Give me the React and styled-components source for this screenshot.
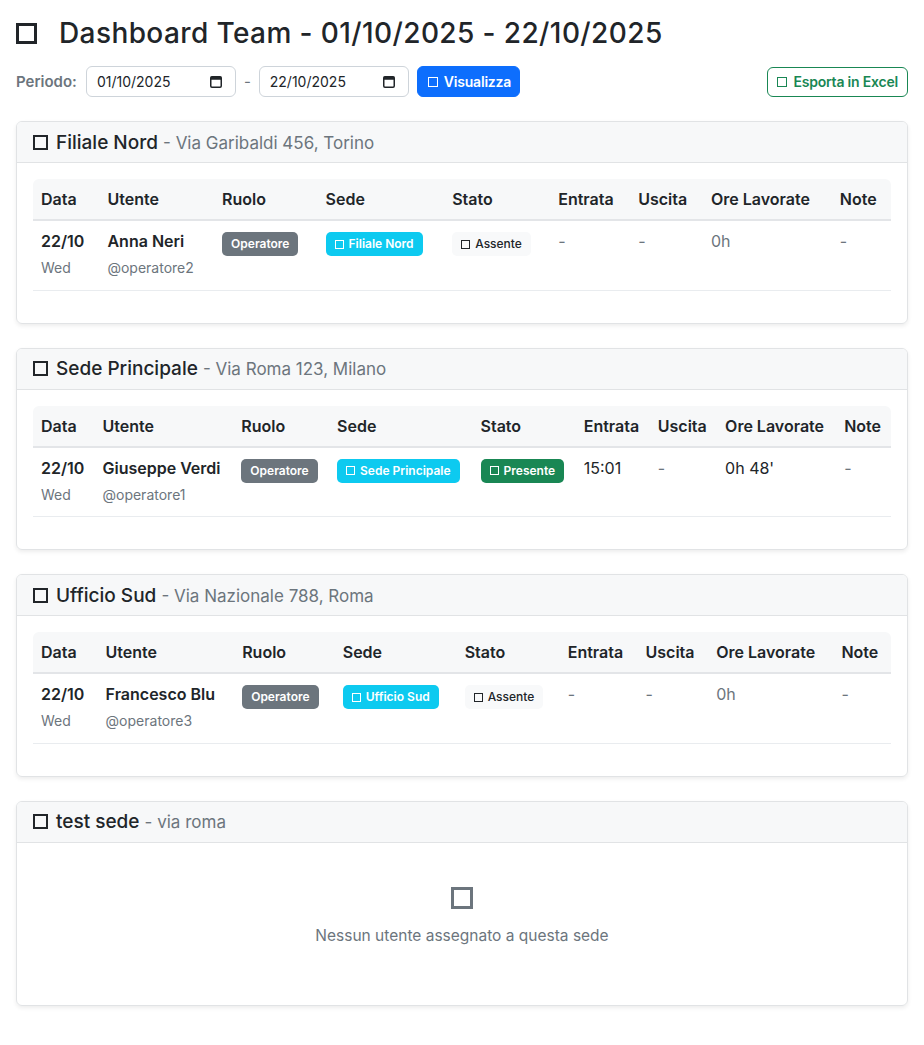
import React from 'react'
import styled, { createGlobalStyle } from 'styled-components'

const GlobalStyle = createGlobalStyle`
  * { box-sizing: border-box; }
  body {
    margin: 0;
    background: #fff;
    color: #212529;
    font-family: Inter, "Noto Sans", sans-serif;
  }
`

const sedi = [
  {
    name: 'Filiale Nord',
    address: 'Via Garibaldi 456, Torino',
    rows: [
      { date: '22/10', day: 'Wed', name: 'Anna Neri', user: '@operatore2', sede: 'Filiale Nord', present: false, entrata: '-', uscita: '-', ore: '0h', note: '-' },
    ],
  },
  {
    name: 'Sede Principale',
    address: 'Via Roma 123, Milano',
    rows: [
      { date: '22/10', day: 'Wed', name: 'Giuseppe Verdi', user: '@operatore1', sede: 'Sede Principale', present: true, entrata: '15:01', uscita: '-', ore: "0h 48'", note: '-' },
    ],
  },
  {
    name: 'Ufficio Sud',
    address: 'Via Nazionale 788, Roma',
    rows: [
      { date: '22/10', day: 'Wed', name: 'Francesco Blu', user: '@operatore3', sede: 'Ufficio Sud', present: false, entrata: '-', uscita: '-', ore: '0h', note: '-' },
    ],
  },
  { name: 'test sede', address: 'via roma', rows: [] },
]

const columns = ['Data', 'Utente', 'Ruolo', 'Sede', 'Stato', 'Entrata', 'Uscita', 'Ore Lavorate', 'Note']

function CalendarIcon() {
  return (
    <svg width="12" height="13" viewBox="0 0 12 13">
      <rect x="0.75" y="1.75" width="10.5" height="10.5" rx="1.2" fill="none" stroke="#212529" strokeWidth="1.5" />
      <rect x="0.75" y="1.75" width="10.5" height="3" fill="#212529" />
    </svg>
  )
}

function DateField({ value }) {
  return (
    <DateBox>
      <span>{value}</span>
      <CalendarIcon />
    </DateBox>
  )
}

function SedeCard({ sede }) {
  return (
    <Card>
      <CardHeader>
        <Glyph $size={15} $stroke={2} />
        <HeaderTitle>
          {sede.name} <Address>- {sede.address}</Address>
        </HeaderTitle>
      </CardHeader>
      <CardBody>
        {sede.rows.length === 0 ? (
          <Empty>
            <Glyph $size={22} $stroke={3} />
            <EmptyText>Nessun utente assegnato a questa sede</EmptyText>
          </Empty>
        ) : (
          <Table>
            <thead>
              <tr>
                {columns.map(c => <Th key={c}>{c}</Th>)}
              </tr>
            </thead>
            <tbody>
              {sede.rows.map(r => (
                <tr key={r.user}>
                  <Td>
                    <Strong>{r.date}</Strong>
                    <Sub>{r.day}</Sub>
                  </Td>
                  <Td>
                    <Strong>{r.name}</Strong>
                    <Sub>{r.user}</Sub>
                  </Td>
                  <Td><Badge $bg="#6c757d">Operatore</Badge></Td>
                  <Td>
                    <Badge $bg="#0dcaf0"><Glyph $size={9} $stroke={1.5} />{r.sede}</Badge>
                  </Td>
                  <Td>
                    {r.present
                      ? <Badge $bg="#198754"><Glyph $size={9} $stroke={1.5} />Presente</Badge>
                      : <Badge $bg="#f8f9fa" $color="#212529" $weight={500}><Glyph $size={9} $stroke={1.5} />Assente</Badge>}
                  </Td>
                  <Td $muted={r.entrata === '-'}>{r.entrata}</Td>
                  <Td $muted>{r.uscita}</Td>
                  <Td $muted={!r.present}>{r.ore}</Td>
                  <Td $muted>{r.note}</Td>
                </tr>
              ))}
            </tbody>
          </Table>
        )}
      </CardBody>
    </Card>
  )
}

export default function App() {
  return (
    <Page>
      <GlobalStyle />
      <Title>
        <Glyph $size={21} $stroke={3} />
        <span>Dashboard Team - 01/10/2025 - 22/10/2025</span>
      </Title>
      <Toolbar>
        <Filters>
          <Label>Periodo:</Label>
          <DateField value="01/10/2025" />
          <Dash>-</Dash>
          <DateField value="22/10/2025" />
          <PrimaryButton><Glyph $size={10} $stroke={1.5} />Visualizza</PrimaryButton>
        </Filters>
        <ExportButton><Glyph $size={10} $stroke={1.5} />Esporta in Excel</ExportButton>
      </Toolbar>
      {sedi.map(s => <SedeCard key={s.name} sede={s} />)}
    </Page>
  )
}

const Page = styled.div`
  padding: 16px 16px 40px;
`

const Glyph = styled.span`
  display: inline-block;
  flex-shrink: 0;
  width: ${p => p.$size}px;
  height: ${p => p.$size}px;
  border: ${p => p.$stroke}px solid currentColor;
`

const Title = styled.h1`
  display: flex;
  align-items: center;
  gap: 22px;
  margin: 0 0 16px;
  padding-top: 1px;
  height: 34px;
  font-size: 28px;
  font-weight: 500;
  line-height: 1.2;
  letter-spacing: 0.4px;
  color: #212529;
`

const Toolbar = styled.div`
  display: flex;
  justify-content: space-between;
  align-items: center;
  margin-bottom: 24px;
`

const Filters = styled.div`
  display: flex;
  align-items: center;
  gap: 8px;
`

const Label = styled.span`
  font-size: 15px;
  font-weight: 600;
  color: #6c757d;
  margin-right: 1px;
`

const Dash = styled.span`
  color: #6c757d;
  font-size: 15px;
`

const DateBox = styled.div`
  display: flex;
  align-items: center;
  justify-content: space-between;
  width: 150px;
  height: 31px;
  padding: 0 13px 0 10px;
  border: 1px solid #ced4da;
  border-radius: 6px;
  font-size: 14px;
  color: #212529;
`

const PrimaryButton = styled.button`
  display: inline-flex;
  align-items: center;
  gap: 6px;
  height: 31px;
  padding: 0 8px 0 10px;
  border: 1px solid #0d6efd;
  border-radius: 6px;
  background: #0d6efd;
  color: #fff;
  font-family: inherit;
  font-size: 14px;
  font-weight: 600;
  letter-spacing: -0.2px;
`

const ExportButton = styled(PrimaryButton)`
  height: 30px;
  padding: 0 9px;
  background: #fff;
  border-color: #198754;
  color: #198754;
`

const Card = styled.div`
  border: 1px solid #e1e3e5;
  border-radius: 6px;
  box-shadow: 0 2px 4px rgba(0, 0, 0, 0.075);
  margin-bottom: 24px;
  overflow: hidden;
`

const CardHeader = styled.div`
  display: flex;
  align-items: center;
  gap: 8px;
  height: 41px;
  padding: 0 16px;
  background: #f7f8f9;
  border-bottom: 1px solid #e1e3e5;
  color: #212529;
`

const HeaderTitle = styled.span`
  font-size: 19px;
  font-weight: 500;
  white-space: pre;
`

const Address = styled.span`
  font-size: 17px;
  font-weight: 400;
  color: #6c757d;
`

const CardBody = styled.div`
  padding: 16px;
`

const Table = styled.table`
  width: 100%;
  border-collapse: separate;
  border-spacing: 0;
  margin-bottom: 16px;
  font-size: 16px;
`

const Th = styled.th`
  text-align: left;
  padding: 8px;
  height: 42px;
  background: #f7f8f9;
  border-bottom: 2px solid #e3e5e8;
  font-weight: 600;
  white-space: nowrap;
  &:first-child { border-top-left-radius: 6px; }
  &:last-child { border-top-right-radius: 6px; }
`

const Td = styled.td`
  vertical-align: top;
  padding: 8px 8px 9.5px;
  line-height: 24px;
  border-bottom: 1px solid #e9ecef;
  white-space: nowrap;
  color: ${p => (p.$muted ? '#6c757d' : '#212529')};
`

const Strong = styled.div`
  font-weight: 600;
`

const Sub = styled.div`
  margin-top: 3px;
  font-size: 14px;
  color: #6c757d;
`

const Badge = styled.span`
  display: inline-flex;
  align-items: center;
  gap: 5px;
  height: 24px;
  margin-top: 3px;
  padding: 0 9px;
  border-radius: 5px;
  background: ${p => p.$bg};
  color: ${p => p.$color || '#fff'};
  font-size: 12px;
  font-weight: ${p => p.$weight || 600};
  line-height: 1;
  vertical-align: top;
`

const Empty = styled.div`
  display: flex;
  flex-direction: column;
  align-items: center;
  padding: 28px 0 41px;
  color: #6c757d;
`

const EmptyText = styled.div`
  margin-top: 15px;
  font-size: 15.5px;
  line-height: 24px;
`
